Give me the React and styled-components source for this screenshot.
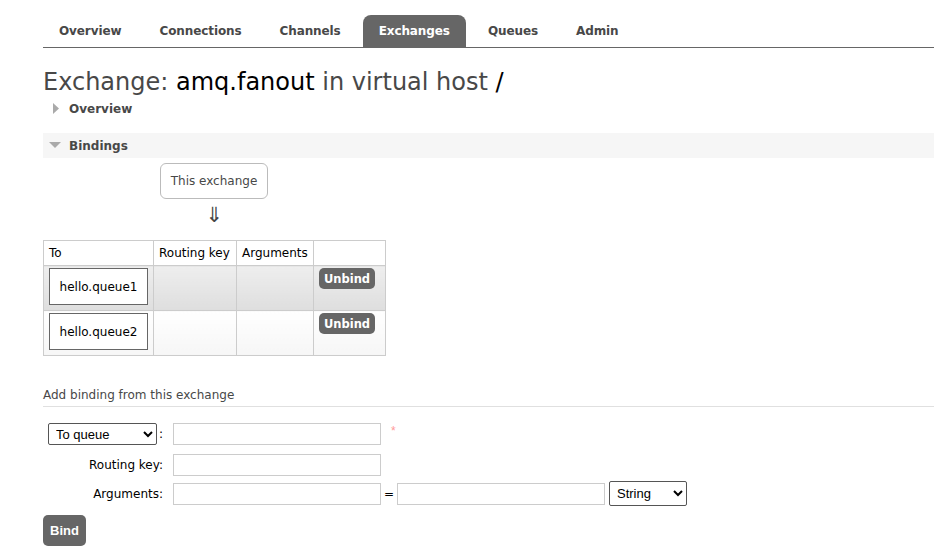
import styled, { createGlobalStyle } from "styled-components";

const GlobalStyle = createGlobalStyle`
  html, body {
    margin: 0;
    padding: 0;
    background: #fff;
  }
  body {
    font-family: "DejaVu Sans", Verdana, sans-serif;
    font-size: 12px;
    color: #484848;
  }
`;

const tabs = ["Overview", "Connections", "Channels", "Exchanges", "Queues", "Admin"];
const bindings = ["hello.queue1", "hello.queue2"];

export default function App() {
  return (
    <Page>
      <GlobalStyle />
      <TabBar>
        {tabs.map((t) => (
          <Tab key={t} $active={t === "Exchanges"}>
            {t}
          </Tab>
        ))}
      </TabBar>

      <Title>
        Exchange: <Strong>amq.fanout</Strong> in virtual host <Strong>/</Strong>
      </Title>

      <SectionHead>
        <Triangle dir="right" />
        Overview
      </SectionHead>

      <SectionHead $open>
        <Triangle dir="down" />
        Bindings
      </SectionHead>

      <Diagram>
        <ThisExchange>This exchange</ThisExchange>
        <Arrow>⇓</Arrow>
      </Diagram>

      <BindTable>
        <colgroup>
          <col style={{ width: 110 }} />
          <col style={{ width: 83 }} />
          <col style={{ width: 77 }} />
          <col style={{ width: 72 }} />
        </colgroup>
        <thead>
          <tr>
            <Th>To</Th>
            <Th>Routing key</Th>
            <Th>Arguments</Th>
            <Th></Th>
          </tr>
        </thead>
        <tbody>
          {bindings.map((q, i) => {
            const alt = i % 2 === 1;
            return (
              <tr key={q}>
                <Td $alt={alt}>
                  <QueueBox>{q}</QueueBox>
                </Td>
                <Td $alt={alt} />
                <Td $alt={alt} />
                <Td $alt={alt}>
                  <SmallButton>Unbind</SmallButton>
                </Td>
              </tr>
            );
          })}
        </tbody>
      </BindTable>

      <SubHead>Add binding from this exchange</SubHead>

      <Form>
        <FormRow>
          <LabelCell>
            <Select $w={109}>
              <option>To queue</option>
            </Select>
            :
          </LabelCell>
          <Input />
          <Required>*</Required>
        </FormRow>
        <FormRow $gap={9}>
          <LabelCell>Routing key:</LabelCell>
          <Input />
        </FormRow>
        <FormRow $gap={5}>
          <LabelCell>Arguments:</LabelCell>
          <Input />
          <Equals>=</Equals>
          <Input />
          <Select $w={78} $tall>
            <option>String</option>
          </Select>
        </FormRow>
      </Form>

      <BindButton>Bind</BindButton>
    </Page>
  );
}

function Triangle({ dir }) {
  return dir === "down" ? (
    <svg width="12" height="7" viewBox="0 0 12 7">
      <path d="M0 0 L12 0 L6 6 Z" fill="#aaa" />
    </svg>
  ) : (
    <svg width="6" height="11" viewBox="0 0 6 11">
      <path d="M0 0 L6 5.5 L0 11 Z" fill="#aaa" />
    </svg>
  );
}

const Page = styled.div`
  padding: 15px 0 0 43px;
`;

const TabBar = styled.div`
  display: flex;
  gap: 6px;
  height: 32px;
  border-bottom: 1px solid #666;
`;

const Tab = styled.div`
  display: flex;
  align-items: center;
  padding: 0 16px;
  font-weight: bold;
  font-size: 12px;
  letter-spacing: -0.1px;
  color: ${(p) => (p.$active ? "#fff" : "#484848")};
  background: ${(p) => (p.$active ? "#666" : "transparent")};
  border-radius: 8px 8px 0 0;
`;

const Title = styled.h1`
  margin: 20px 0 0;
  font-size: 24px;
  font-weight: normal;
  color: #484848;
  line-height: 28px;
`;

const Strong = styled.span`
  color: #000;
`;

const SectionHead = styled.div`
  display: flex;
  align-items: center;
  gap: ${(p) => (p.$open ? "8px" : "10px")};
  height: 25px;
  margin-top: ${(p) => (p.$open ? "12px" : "0")};
  padding-left: ${(p) => (p.$open ? "6px" : "10px")};
  background: ${(p) => (p.$open ? "#f6f6f6" : "transparent")};
  font-weight: bold;
  font-size: 12px;
  color: #484848;
`;

const Diagram = styled.div`
  display: flex;
  flex-direction: column;
  align-items: center;
  width: 108px;
  margin: 5px 0 0 117px;
`;

const ThisExchange = styled.div`
  box-sizing: border-box;
  width: 108px;
  height: 36px;
  display: flex;
  align-items: center;
  justify-content: center;
  border: 1px solid #bbb;
  border-radius: 6px;
  color: #484848;
`;

const Arrow = styled.div`
  font-family: "DejaVu Sans", sans-serif;
  font-size: 21px;
  line-height: 30px;
  color: #444;
  height: 30px;
  margin-top: 1px;
`;

const BindTable = styled.table`
  border-collapse: collapse;
  table-layout: fixed;
  width: 342px;
  margin-top: 10px;
  color: #000;
`;

const Th = styled.th`
  height: 24px;
  padding: 0 5px;
  border: 1px solid #ccc;
  text-align: left;
  font-weight: normal;
  font-size: 12px;
  white-space: nowrap;
`;

const Td = styled.td`
  height: 45px;
  padding: 2px 5px 0;
  border: 1px solid #ccc;
  vertical-align: top;
  box-sizing: border-box;
  background: ${(p) =>
    p.$alt
      ? "linear-gradient(#ffffff, #f6f6f6)"
      : "linear-gradient(#eeeeee, #dedede)"};
`;

const QueueBox = styled.div`
  box-sizing: border-box;
  width: 99px;
  height: 37px;
  display: flex;
  align-items: center;
  justify-content: center;
  background: #fff;
  border: 1px solid #666;
  color: #000;
`;

const SmallButton = styled.span`
  display: inline-flex;
  align-items: center;
  justify-content: center;
  width: 56px;
  height: 21px;
  border-radius: 5px;
  background: #666;
  color: #fff;
  font-weight: bold;
  font-size: 11.5px;
`;

const SubHead = styled.div`
  margin-top: 31px;
  padding-bottom: 3px;
  border-bottom: 1px solid #e0e0e0;
  color: #484848;
  font-size: 12px;
  line-height: 16px;
`;

const Form = styled.div`
  display: flex;
  flex-direction: column;
  margin-top: 16px;
  padding-left: 5px;
`;

const FormRow = styled.div`
  display: flex;
  align-items: center;
  margin-top: ${(p) => p.$gap || 0}px;
  font-family: "Liberation Sans", Arial, sans-serif;
  font-size: 13px;
  color: #000;
`;

const LabelCell = styled.div`
  width: 125px;
  padding-right: 10px;
  box-sizing: border-box;
  display: flex;
  align-items: center;
  justify-content: flex-end;
  gap: 2px;
  font-family: "DejaVu Sans", sans-serif;
  font-size: 12px;
  color: #000;
`;

const Select = styled.select`
  box-sizing: border-box;
  width: ${(p) => p.$w}px;
  height: ${(p) => (p.$tall ? 25 : 22)}px;
  font-family: "Liberation Sans", Arial, sans-serif;
  font-size: 13px;
  color: #000;
  border: 1px solid #555;
  border-radius: 2px;
  background: #fff;
  padding: 0 3px;
  margin-left: ${(p) => (p.$tall ? "4px" : "0")};
`;

const Input = styled.input`
  box-sizing: border-box;
  width: 208px;
  height: 22px;
  border: 1px solid #ccc;
  margin: 0;
  padding: 0 4px;
`;

const Required = styled.span`
  color: #f99;
  font-size: 12px;
  margin-left: 10px;
  align-self: flex-start;
  margin-top: 1px;
`;

const Equals = styled.span`
  width: 16px;
  text-align: center;
  font-family: "DejaVu Sans", sans-serif;
  font-size: 12px;
`;

const BindButton = styled.button`
  margin-top: 9px;
  width: 43px;
  height: 31px;
  border: none;
  border-radius: 5px;
  background: #666;
  color: #fff;
  font-family: "Liberation Sans", Arial, sans-serif;
  font-size: 13px;
  font-weight: bold;
  padding: 0;
`;
